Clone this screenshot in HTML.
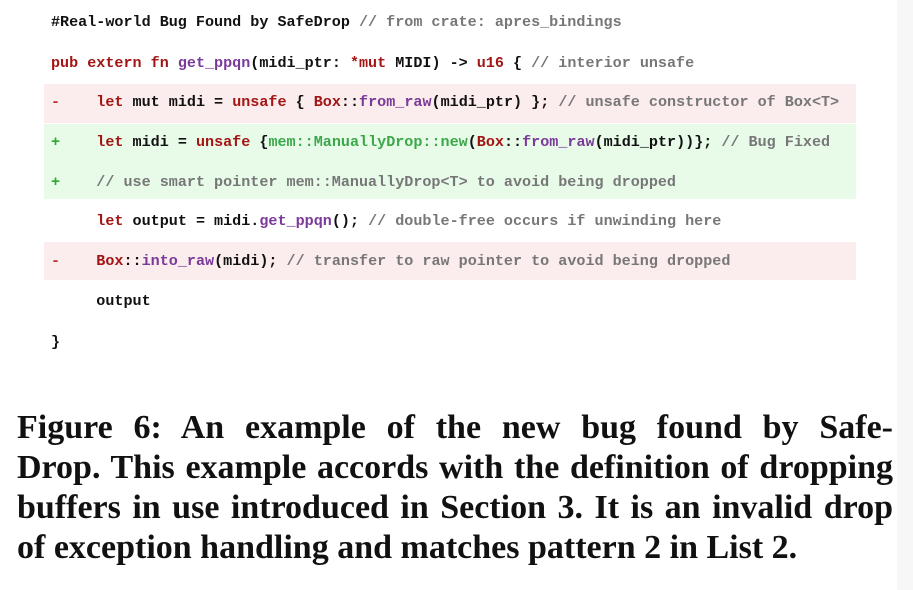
<!DOCTYPE html>
<html><head><style>
body{margin:0;width:913px;height:590px;background:#fff;position:relative;overflow:hidden}
.strip{position:absolute;left:897px;top:0;width:16px;height:590px;background:#f7f7f7}
.ln{position:absolute;left:51px;height:20px;line-height:20px;font-family:"Liberation Mono",monospace;font-size:15.1px;font-weight:bold;color:#111;white-space:pre}
.bg{position:absolute;left:44px;width:812px}
.r{background:#fbeced}.g{background:#e8fbe9}
.k{color:#a31515}.f{color:#7a3a9a}.c{color:#777;font-weight:bold}.m{color:#3aa84a}.p{color:#2aa830}.d{color:#c03030}
.cap{position:absolute;left:17px;top:408px;width:876px;font-family:"Liberation Serif",serif;font-weight:bold;font-size:34px;line-height:40px;color:#111}
.cap div{text-align:justify;text-align-last:justify;white-space:nowrap}
.cap div.last{text-align-last:left}
</style></head><body>
<div class="strip"></div>
<div class="bg r" style="top:84px;height:39px"></div>
<div class="bg g" style="top:124px;height:75px"></div>
<div class="bg r" style="top:242px;height:38px"></div>
<div class="ln" style="top:12px">#Real-world Bug Found by SafeDrop <span class="c">// from crate: apres_bindings</span></div>
<div class="ln" style="top:53px"><span class="k">pub extern fn</span> <span class="f">get_ppqn</span>(midi_ptr: <span class="k">*mut</span> MIDI) -&gt; <span class="k">u16</span> { <span class="c">// interior unsafe</span></div>
<div class="ln" style="top:92px"><span class="d">-</span>    <span class="k">let</span> mut midi = <span class="k">unsafe</span> { <span class="k">Box</span>::<span class="f">from_raw</span>(midi_ptr) }; <span class="c">// unsafe constructor of Box&lt;T&gt;</span></div>
<div class="ln" style="top:132px"><span class="p">+</span>    <span class="k">let</span> midi = <span class="k">unsafe</span> {<span class="m">mem::ManuallyDrop::new</span>(<span class="k">Box</span>::<span class="f">from_raw</span>(midi_ptr))}; <span class="c">// Bug Fixed</span></div>
<div class="ln" style="top:172px"><span class="p">+</span>    <span class="c">// use smart pointer mem::ManuallyDrop&lt;T&gt; to avoid being dropped</span></div>
<div class="ln" style="top:211px">     <span class="k">let</span> output = midi.<span class="f">get_ppqn</span>(); <span class="c">// double-free occurs if unwinding here</span></div>
<div class="ln" style="top:251px"><span class="d">-</span>    <span class="k">Box</span>::<span class="f">into_raw</span>(midi); <span class="c">// transfer to raw pointer to avoid being dropped</span></div>
<div class="ln" style="top:291px">     output</div>
<div class="ln" style="top:332px">}</div>
<div class="cap">
<div>Figure 6: An example of the new bug found by Safe-</div>
<div>Drop. This example accords with the definition of dropping</div>
<div>buffers in use introduced in Section 3. It is an invalid drop</div>
<div class="last">of exception handling and matches pattern 2 in List 2.</div>
</div>
</body></html>
